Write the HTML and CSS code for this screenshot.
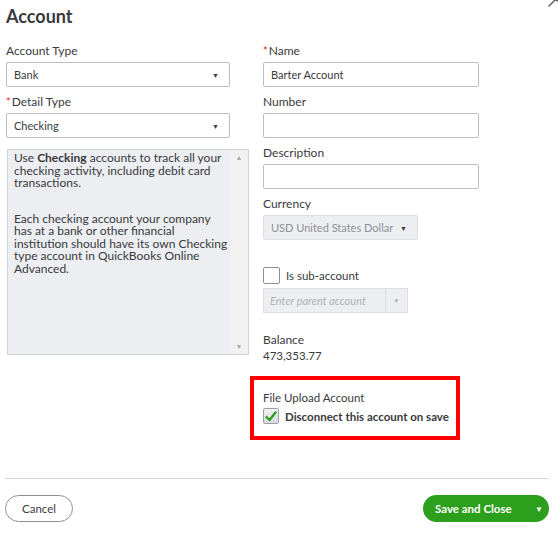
FILE: index.html
```html
<!DOCTYPE html>
<html lang="en">
<head>
    <meta charset="UTF-8">
    <meta name="viewport" content="width=device-width, initial-scale=1.0">
    <title>Account</title>
    <link rel="stylesheet" href="styles.css">
</head>
<body>
    <div class="dialog">
        <svg class="close" width="20" height="20" viewBox="0 0 20 20">
            <path d="M3 3 L17 17 M17 3 L3 17" stroke="#6b6c72" stroke-width="1.6" stroke-linecap="round"/>
        </svg>
        <h1 class="title">Account</h1>

        <div class="form">
            <div class="col col-left">
                <div class="field">
                    <label>Account Type</label>
                    <div class="select">
                        <span>Bank</span>
                        <span class="caret">&#9660;</span>
                    </div>
                </div>
                <div class="field">
                    <label><span class="req">*</span>Detail Type</label>
                    <div class="select">
                        <span>Checking</span>
                        <span class="caret">&#9660;</span>
                    </div>
                </div>
                <div class="detail-box">
                    <div class="detail-text">
                        <p>Use <b>Checking</b> accounts to track all your checking activity, including debit card transactions.</p>
                        <p>Each checking account your company has at a bank or other financial institution should have its own Checking type account in QuickBooks Online Advanced.</p>
                    </div>
                    <div class="scrollbar">
                        <span>&#9650;</span>
                        <span>&#9660;</span>
                    </div>
                </div>
            </div>

            <div class="col col-right">
                <div class="field">
                    <label><span class="req">*</span>Name</label>
                    <div class="input">Barter Account</div>
                </div>
                <div class="field">
                    <label>Number</label>
                    <div class="input"></div>
                </div>
                <div class="field">
                    <label>Description</label>
                    <div class="input"></div>
                </div>
                <div class="field">
                    <label>Currency</label>
                    <div class="select select-currency">
                        <span>USD United States Dollar</span>
                        <span class="caret">&#9660;</span>
                    </div>
                </div>

                <div class="check-row sub">
                    <span class="checkbox"></span>
                    <span>Is sub-account</span>
                </div>
                <div class="combo">
                    <span class="combo-text">Enter parent account</span>
                    <span class="combo-btn">&#9660;</span>
                </div>

                <div class="balance">
                    <label>Balance</label>
                    <div class="balance-value">473,353.77</div>
                </div>

                <div class="upload">
                    <label>File Upload Account</label>
                    <div class="check-row">
                        <span class="checkbox checked">
                            <svg width="12" height="11" viewBox="0 0 12 11"><path d="M1.5 6 L4.5 9 L10.5 1.5" fill="none" stroke="#2ca01c" stroke-width="2.4" stroke-linecap="round" stroke-linejoin="round"/></svg>
                        </span>
                        <span class="strong">Disconnect this account on save</span>
                    </div>
                </div>
            </div>
        </div>

        <div class="footer">
            <button class="btn-cancel">Cancel</button>
            <div class="btn-save">
                <span class="save-label">Save and Close</span>
                <span class="save-caret">&#9660;</span>
            </div>
        </div>
    </div>
</body>
</html>
```

FILE: styles.css
```css
body {
    margin: 0;
    background: #fff;
    font-family: Lato, "Open Sans", sans-serif;
    color: #393a3d;
}
.dialog {
    position: relative;
    width: 558px;
    height: 535px;
    padding: 0 6px;
    box-sizing: border-box;
    overflow: hidden;
}
/* close button sits partly above the visible area */
.close {
    position: absolute;
    top: -11px;
    right: -8px;
}
.title {
    margin: 0;
    padding-top: 6px;
    font-size: 18px;
    font-weight: 700;
    line-height: 20px;
    color: #393a3d;
}
.form {
    display: flex;
    gap: 6px;
    margin-top: 17px;
}
.col-left {
    width: 251px;
}
.col-right {
    width: 216px;
}
.field {
    margin-bottom: 7px;
}
label {
    display: block;
    font-size: 12px;
    line-height: 16px;
    margin-bottom: 3px;
    color: #393a3d;
}
.req {
    color: #d52b1e;
    font-size: 11px;
    margin-right: 1px;
}
.select, .input {
    box-sizing: border-box;
    height: 25px;
    border: 1px solid #babec5;
    border-radius: 2px;
    display: flex;
    align-items: center;
    justify-content: space-between;
    padding: 0 10px 0 7px;
    font-size: 11px;
    color: #393a3d;
}
.col-left .select {
    width: 224px;
}
.caret {
    font-size: 7px;
    color: #393a3d;
}
.select-currency {
    width: 155px;
    background: #eceef1;
    border-color: #dcdee2;
    color: #8d9096;
}

.detail-box {
    display: flex;
    box-sizing: border-box;
    width: 242px;
    height: 206px;
    margin-top: 11px;
    margin-left: 1px;
    background: #eceef1;
    border: 1px solid #cfd2d6;
}
.detail-text {
    flex: 1;
    padding: 2px 1px 2px 6px;
    font-size: 12px;
    line-height: 12.5px;
}
.detail-text p {
    margin: 0 0 23px;
}
.detail-text b {
    font-weight: 700;
}
.scrollbar {
    width: 18px;
    display: flex;
    flex-direction: column;
    justify-content: space-between;
    align-items: center;
    padding: 3px 0 4px;
    background: #f1f1f2;
    font-size: 7px;
    color: #a8abb0;
}

.check-row {
    display: flex;
    align-items: center;
    gap: 6px;
    font-size: 11.5px;
}
.check-row.sub {
    margin-top: 27px;
}
.checkbox {
    box-sizing: border-box;
    width: 17px;
    height: 17px;
    border: 1px solid #8d9096;
    border-radius: 2px;
    display: flex;
    align-items: center;
    justify-content: center;
    background: #fff;
}
.checkbox.checked {
    width: 16px;
    height: 16px;
    border-color: #9ba0a6;
    background: linear-gradient(#eef0f2, #d7dadd);
}
.combo {
    display: flex;
    box-sizing: border-box;
    width: 145px;
    height: 25px;
    margin-top: 4px;
    background: #eceef1;
    border: 1px solid #dcdee2;
    font-size: 11px;
    font-style: italic;
    color: #b0b3b8;
}
.combo-text {
    flex: 1;
    display: flex;
    align-items: center;
    padding-left: 6px;
    border-right: 1px solid #dcdee2;
}
.combo-btn {
    width: 21px;
    display: flex;
    align-items: center;
    justify-content: center;
    font-style: normal;
    font-size: 6px;
    color: #a8abb0;
}
.balance {
    margin-top: 19px;
}
.balance label {
    margin-bottom: 0;
}
.balance-value {
    font-size: 11.5px;
    line-height: 16px;
}

/* highlighted upload option */
.upload {
    margin-top: 12px;
    margin-left: -13px;
    width: 210px;
    height: 64px;
    box-sizing: border-box;
    border: 4px solid #ff0000;
    padding: 11px 0 0 9px;
}
.upload label {
    font-size: 11.5px;
    line-height: 14px;
    margin-bottom: 3px;
}
.strong {
    font-weight: 700;
    font-size: 11.5px;
}

.footer {
    position: absolute;
    left: 5px;
    right: 9px;
    top: 478px;
    border-top: 1px solid #d4d7dc;
    display: flex;
    justify-content: space-between;
    padding-top: 16px;
}
.btn-cancel {
    width: 68px;
    height: 27px;
    border: 1px solid #8d9096;
    border-radius: 14px;
    background: #fff;
    font-family: inherit;
    font-size: 11.5px;
    color: #393a3d;
    padding: 0;
}
.btn-save {
    width: 126px;
    height: 27px;
    border-radius: 14px;
    background: #2ca01c;
    color: #fff;
    display: flex;
    align-items: center;
    font-size: 11.5px;
    font-weight: 700;
}
.save-label {
    padding-left: 12px;
    flex: 1;
}
.save-caret {
    font-size: 8px;
    margin-right: 6px;
}
```
